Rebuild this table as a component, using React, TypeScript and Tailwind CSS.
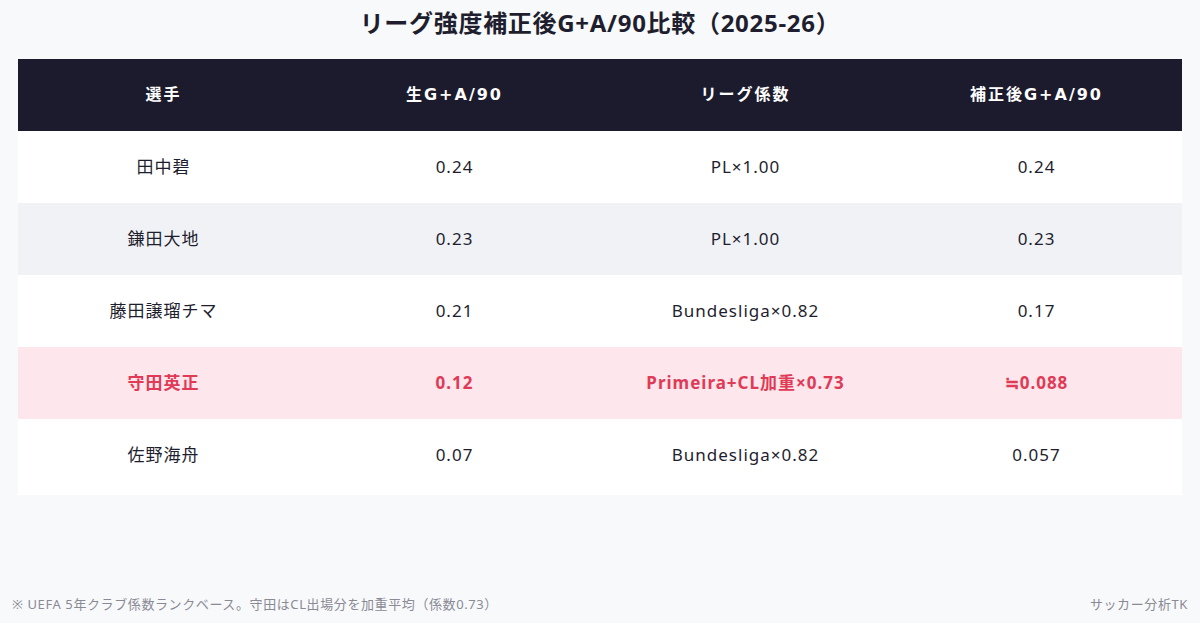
const rows = [
  { name: '田中碧', raw: '0.24', coef: 'PL×1.00', adj: '0.24' },
  { name: '鎌田大地', raw: '0.23', coef: 'PL×1.00', adj: '0.23' },
  { name: '藤田譲瑠チマ', raw: '0.21', coef: 'Bundesliga×0.82', adj: '0.17' },
  { name: '守田英正', raw: '0.12', coef: 'Primeira+CL加重×0.73', adj: '≒0.088', highlight: true },
  { name: '佐野海舟', raw: '0.07', coef: 'Bundesliga×0.82', adj: '0.057' },
];

export default function App() {
  return (
    <div
      className="h-[623px] w-[1200px] bg-[#f8f9fb] flex flex-col text-[#1e1e2e]"
      style={{ fontFamily: '"Noto Sans", "Noto Sans CJK JP", sans-serif' }}
    >
      <h1 className="h-[46px] flex items-center justify-center text-[24px] tracking-[0.7px] font-bold text-[#1e1e2e]">
        リーグ強度補正後G+A/90比較（2025-26）
      </h1>

      <div className="mx-[18px] mt-[13px]">
        <div
          className="grid grid-cols-4 h-[72px] bg-[#1c1b2e] text-white text-[16px] tracking-[2px] font-bold"
          style={{ fontFamily: '"DejaVu Sans", "Noto Sans CJK JP", sans-serif' }}
        >
          <div className="flex items-center justify-center">選手</div>
          <div className="flex items-center justify-center">生G+A/90</div>
          <div className="flex items-center justify-center">リーグ係数</div>
          <div className="flex items-center justify-center">補正後G+A/90</div>
        </div>
        {rows.map((r, i) => (
          <div
            key={r.name}
            className={
              r.highlight
                ? 'grid grid-cols-4 h-[72px] bg-[#fde6ec] text-[#e03a56] font-bold text-[17px] tracking-[1px]'
                : i % 2 === 1
                  ? 'grid grid-cols-4 h-[72px] bg-[#f1f2f6] text-[17px] tracking-[1px]'
                  : i === rows.length - 1
                    ? 'grid grid-cols-4 h-[76px] bg-white text-[17px] tracking-[1px] pb-[4px]'
                    : 'grid grid-cols-4 h-[72px] bg-white text-[17px] tracking-[1px]'
            }
          >
            <div className="flex items-center justify-center">{r.name}</div>
            <div className="flex items-center justify-center">{r.raw}</div>
            <div className="flex items-center justify-center">{r.coef}</div>
            <div className="flex items-center justify-center">{r.adj}</div>
          </div>
        ))}
      </div>

      <div className="flex-1" />

      <div className="flex justify-between items-center px-[12px] pb-[9px] text-[13px] tracking-[0.6px] text-[#8a8a95]">
        <span>※ UEFA 5年クラブ係数ランクベース。守田はCL出場分を加重平均（係数0.73）</span>
        <span>サッカー分析TK</span>
      </div>
    </div>
  );
}
